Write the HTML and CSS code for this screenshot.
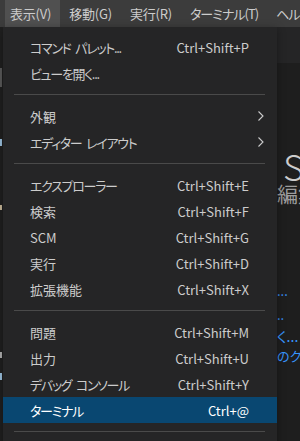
FILE: index.html
```html
<!DOCTYPE html>
<html lang="ja">
<head>
  <meta charset="UTF-8" />
  <meta name="viewport" content="width=device-width, initial-scale=1" />
  <title>表示メニュー</title>
  <link rel="stylesheet" href="styles.css">
</head>
<body>
  <div class="menubar">
    <div class="menubar-item active">表示(V)</div>
    <div class="menubar-item">移動(G)</div>
    <div class="menubar-item">実行(R)</div>
    <div class="menubar-item kana">ターミナル(T)</div>
    <div class="menubar-item kana">ヘルプ(H)</div>
  </div>

  <div class="workbench">
    <div class="side">
      <span class="mark mark-gray"></span>
      <span class="mark mark-blue"></span>
      <span class="mark mark-light"></span>
      <span class="mark mark-light2"></span>
      <span class="mark mark-blue2"></span>
    </div>
    <div class="editor">
      <div class="tabs"></div>
      <div class="welcome">
        <div class="welcome-title">S</div>
        <div class="welcome-sub">編集の進化</div>
        <div class="welcome-links">
          <div class="link l1">...</div>
          <div class="link l2">..</div>
          <div class="link l3">く...</div>
          <div class="link l4">のクローン</div>
        </div>
      </div>
    </div>
  </div>

  <!-- ドロップダウン (表示メニュー) -->
  <div class="menu">
    <div class="menu-item"><span class="label kana">コマンド パレット...</span><span class="keys">Ctrl+Shift+P</span><span class="sub"></span></div>
    <div class="menu-item"><span class="label kana">ビューを開く...</span><span class="keys"></span><span class="sub"></span></div>
    <div class="separator"></div>
    <div class="menu-item"><span class="label">外観</span><span class="keys"></span><span class="sub">
      <svg width="8" height="12" viewBox="0 0 8 12"><path d="M1.5 1.5 L6 6 L1.5 10.5" fill="none" stroke="#cccccc" stroke-width="1.1"/></svg>
    </span></div>
    <div class="menu-item"><span class="label kana">エディター レイアウト</span><span class="keys"></span><span class="sub">
      <svg width="8" height="12" viewBox="0 0 8 12"><path d="M1.5 1.5 L6 6 L1.5 10.5" fill="none" stroke="#cccccc" stroke-width="1.1"/></svg>
    </span></div>
    <div class="separator"></div>
    <div class="menu-item"><span class="label kana">エクスプローラー</span><span class="keys">Ctrl+Shift+E</span><span class="sub"></span></div>
    <div class="menu-item"><span class="label">検索</span><span class="keys">Ctrl+Shift+F</span><span class="sub"></span></div>
    <div class="menu-item"><span class="label">SCM</span><span class="keys">Ctrl+Shift+G</span><span class="sub"></span></div>
    <div class="menu-item"><span class="label">実行</span><span class="keys">Ctrl+Shift+D</span><span class="sub"></span></div>
    <div class="menu-item"><span class="label">拡張機能</span><span class="keys">Ctrl+Shift+X</span><span class="sub"></span></div>
    <div class="separator"></div>
    <div class="menu-item"><span class="label">問題</span><span class="keys">Ctrl+Shift+M</span><span class="sub"></span></div>
    <div class="menu-item"><span class="label">出力</span><span class="keys">Ctrl+Shift+U</span><span class="sub"></span></div>
    <div class="menu-item"><span class="label kana">デバッグ コンソール</span><span class="keys">Ctrl+Shift+Y</span><span class="sub"></span></div>
    <div class="menu-item selected"><span class="label kana">ターミナル</span><span class="keys">Ctrl+@</span><span class="sub"></span></div>
    <div class="separator"></div>
    <div class="menu-item"><span class="label">右端での折り返し</span><span class="keys">Alt+Z</span><span class="sub"></span></div>
  </div>
</body>
</html>
```

FILE: styles.css
```css
/* базовое */
* {
  box-sizing: border-box;
}
html, body {
  margin: 0;
  height: 100%;
}
body {
  width: 300px;
  height: 441px;
  overflow: hidden;
  background: #1e1e1e;
  color: #cccccc;
  font-family: "Noto Sans CJK JP", "Noto Sans", sans-serif;
  font-size: 13px;
  font-feature-settings: "palt";
  position: relative;
}

/* меню сверху */
.menubar {
  height: 27px;
  background: #3c3c3c;
  display: flex;
  padding-left: 5px;
  white-space: nowrap;
  overflow: hidden;
}
.menubar-item {
  line-height: 27px;
  padding: 0 9px 0 5px;
  margin-right: 4px;
  color: #cccccc;
  letter-spacing: -0.2px;
}
.menubar-item.kana {
  letter-spacing: -1px;
}
.menubar-item.active {
  background: #505050;
}

.workbench {
  display: flex;
  height: 414px;
}
.side {
  width: 277px;
  background: #202020;
  display: flex;
  flex-direction: column;
}
.mark {
  display: block;
  width: 2px;
}
.mark-gray {
  height: 19px;
  margin-top: 41px;
  background: #5a5a5a;
}
.mark-blue {
  height: 7px;
  margin-top: 52px;
  background: #9cc3e0;
}
.mark-light {
  height: 5px;
  margin-top: 59px;
  background: #c8b89a;
}
.mark-light2 {
  height: 6px;
  margin-top: 142px;
  background: #b0b0b0;
}
.mark-blue2 {
  height: 7px;
  margin-top: 15px;
  background: #9cc3e0;
}

.editor {
  flex: 1;
  overflow: hidden;
  white-space: nowrap;
}
.tabs {
  height: 36px;
  background: #252526;
}
.welcome-title {
  font-size: 36px;
  line-height: 30px;
  font-weight: 300;
  color: #cccccc;
  margin-top: 87px;
  padding-left: 6px;
}
.welcome-sub {
  font-size: 21px;
  line-height: 26px;
  color: #9d9d9d;
}
.welcome-links {
  margin-top: 75px;
  color: #3794ff;
  font-size: 13px;
}
.link {
  line-height: 20px;
}
.l1 { margin-bottom: 4px; }
.l2 { margin-bottom: 1px; }
.l3 { font-size: 14px; }

/* выпадающее меню */
.menu {
  position: absolute;
  top: 27px;
  left: 3px;
  width: 274px;
  padding-top: 7px;
  background: #252526;
  box-shadow: 0 2px 8px rgba(0, 0, 0, 0.36);
}
.menu-item {
  display: flex;
  align-items: center;
  height: 26px;
  padding-left: 27px;
  color: #cccccc;
  white-space: nowrap;
}
.menu-item.selected {
  background: #094771;
  color: #ffffff;
}
.label {
  flex: 1;
}
.label.kana {
  letter-spacing: -1.3px;
  word-spacing: 3px;
}
.keys {
  text-align: right;
}
.sub {
  width: 28px;
  padding-left: 8px;
  display: flex;
  align-items: center;
}
.separator {
  height: 1px;
  margin: 8px 12px 8px 11px;
  background: #4a4a4a;
}
```
